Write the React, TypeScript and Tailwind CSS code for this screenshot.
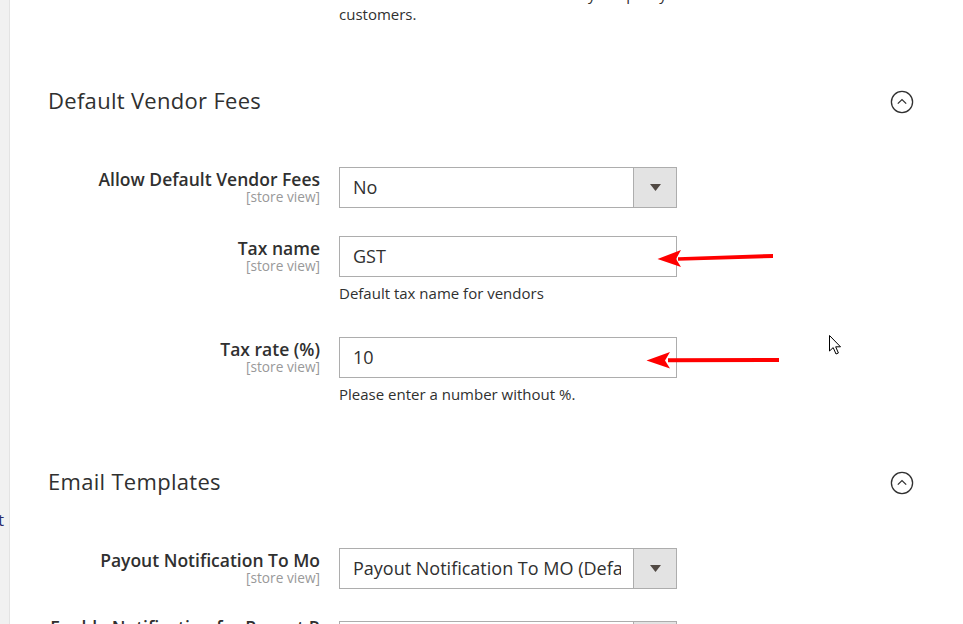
import React from "react";

const font = { fontFamily: '"Open Sans", "Noto Sans", sans-serif' };

function ChevronCircle() {
  return (
    <svg width="24" height="24" viewBox="0 0 24 24" className="block">
      <circle cx="12" cy="12" r="10.6" fill="none" stroke="#303030" strokeWidth="1.3" />
      <path d="M7.8 13.6 L12 9.6 L16.2 13.6" fill="none" stroke="#303030" strokeWidth="1.3" />
    </svg>
  );
}

function Label({ text, top }: { text: string; top?: string }) {
  return (
    <div className={"flex flex-col items-end pt-[3px] text-right " + (top ?? "")}>
      <span className="text-[17.5px] leading-[18px] font-semibold text-[#303030] whitespace-nowrap">{text}</span>
      <span className="text-[13.7px] leading-[18px] text-[#999999] whitespace-nowrap">[store view]</span>
    </div>
  );
}

function SelectBox({ value }: { value: string }) {
  return (
    <div className="flex h-[41px] w-[338px] border border-[#adadad] bg-white">
      <div className="min-w-0 flex-1 overflow-hidden whitespace-nowrap pl-[13px] pr-[12px] text-[18px] leading-[39px] text-[#303030]">
        <div className="overflow-hidden">{value}</div>
      </div>
      <div className="flex w-[43px] shrink-0 items-center justify-center border-l border-[#adadad] bg-[#e3e3e3]">
        <svg width="11" height="7" viewBox="0 0 11 7">
          <path d="M0 0 H11 L5.5 7 Z" fill="#514943" />
        </svg>
      </div>
    </div>
  );
}

function TextBox({ value }: { value: string }) {
  return (
    <div className="h-[41px] w-[338px] border border-[#adadad] bg-white pl-[13px] text-[18px] leading-[39px] text-[#303030]">
      {value}
    </div>
  );
}

function Row({
  label,
  children,
  className,
  labelTop,
}: {
  label: string;
  children: React.ReactNode;
  className?: string;
  labelTop?: string;
}) {
  return (
    <div className={"grid grid-cols-[272px_338px] gap-x-[19px] " + (className ?? "")}>
      <Label text={label} top={labelTop} />
      <div className="flex flex-col">{children}</div>
    </div>
  );
}

function Note({ text }: { text: string }) {
  return <div className="mt-[6px] text-[15px] leading-[20px] text-[#303030] whitespace-nowrap">{text}</div>;
}

function SectionHeader({ title }: { title: string }) {
  return (
    <div className="flex items-center justify-between pr-[16px]">
      <h2 className="text-[22px] leading-[28px] tracking-[0.3px] text-[#303030]">{title}</h2>
      <div className="mt-[3px]">
        <ChevronCircle />
      </div>
    </div>
  );
}

export default function App() {
  return (
    <div className="relative flex h-[624px] w-[963px] overflow-hidden bg-white" style={font}>
      <div className="w-[10px] shrink-0 border-r border-[#e3e3e3] bg-[#f1f1f1] pt-[509px]">
        <div className="ml-[-2px] text-[17px] leading-[22px] text-[#2b2b6b]">t</div>
      </div>
      <div className="flex flex-1 flex-col pl-[38px] pr-[33px]">
        <div className="mt-[-16px] grid grid-cols-[272px_338px] gap-x-[19px]">
          <div />
          <div className="text-[15px] leading-[20px] text-[#303030]">
            <div className="whitespace-nowrap">Fees will be shown to the vendors by the policy.</div>
            <div>customers.</div>
          </div>
        </div>
        <div className="mt-[38px] h-px bg-[#cccccc]" />
        <div className="mt-[24px]">
          <SectionHeader title="Default Vendor Fees" />
        </div>
        <Row label="Allow Default Vendor Fees" className="mt-[53px]">
          <SelectBox value="No" />
        </Row>
        <Row label="Tax name" className="mt-[28px]">
          <TextBox value="GST" />
          <Note text="Default tax name for vendors" />
        </Row>
        <Row label="Tax rate (%)" className="mt-[34px]">
          <TextBox value="10" />
          <Note text="Please enter a number without %." />
        </Row>
        <div className="mt-[39px] h-px bg-[#cccccc]" />
        <div className="mt-[24px]">
          <SectionHeader title="Email Templates" />
        </div>
        <Row label="Payout Notification To Mo" className="mt-[53px]">
          <SelectBox value="Payout Notification To MO (Default)" />
        </Row>
        <Row label="Enable Notification for Payout R" className="mt-[32px]" labelTop="mt-[-6px]">
          <SelectBox value="Yes" />
        </Row>
      </div>

      <svg className="pointer-events-none absolute left-0 top-0" width="963" height="624" viewBox="0 0 963 624">
        <path d="M773 254 L678 257.2 L678 260.8 L773 258 Z" fill="#ff0000" />
        <path d="M657.5 259 L681 250 L676 259 L681 267 Z" fill="#ff0000" />
        <path d="M779 358 L668 358.2 L668 362.2 L779 362 Z" fill="#ff0000" />
        <path d="M646.5 360.5 L670 352 L665 360.5 L670 368.5 Z" fill="#ff0000" />
        <path
          d="M829.5 335.5 L829.5 351 L833.2 347.6 L836 354 L838.4 353 L835.7 346.8 L840.5 346.8 Z"
          fill="#ffffff"
          stroke="#000000"
          strokeWidth="1"
          strokeLinejoin="miter"
        />
      </svg>
    </div>
  );
}
